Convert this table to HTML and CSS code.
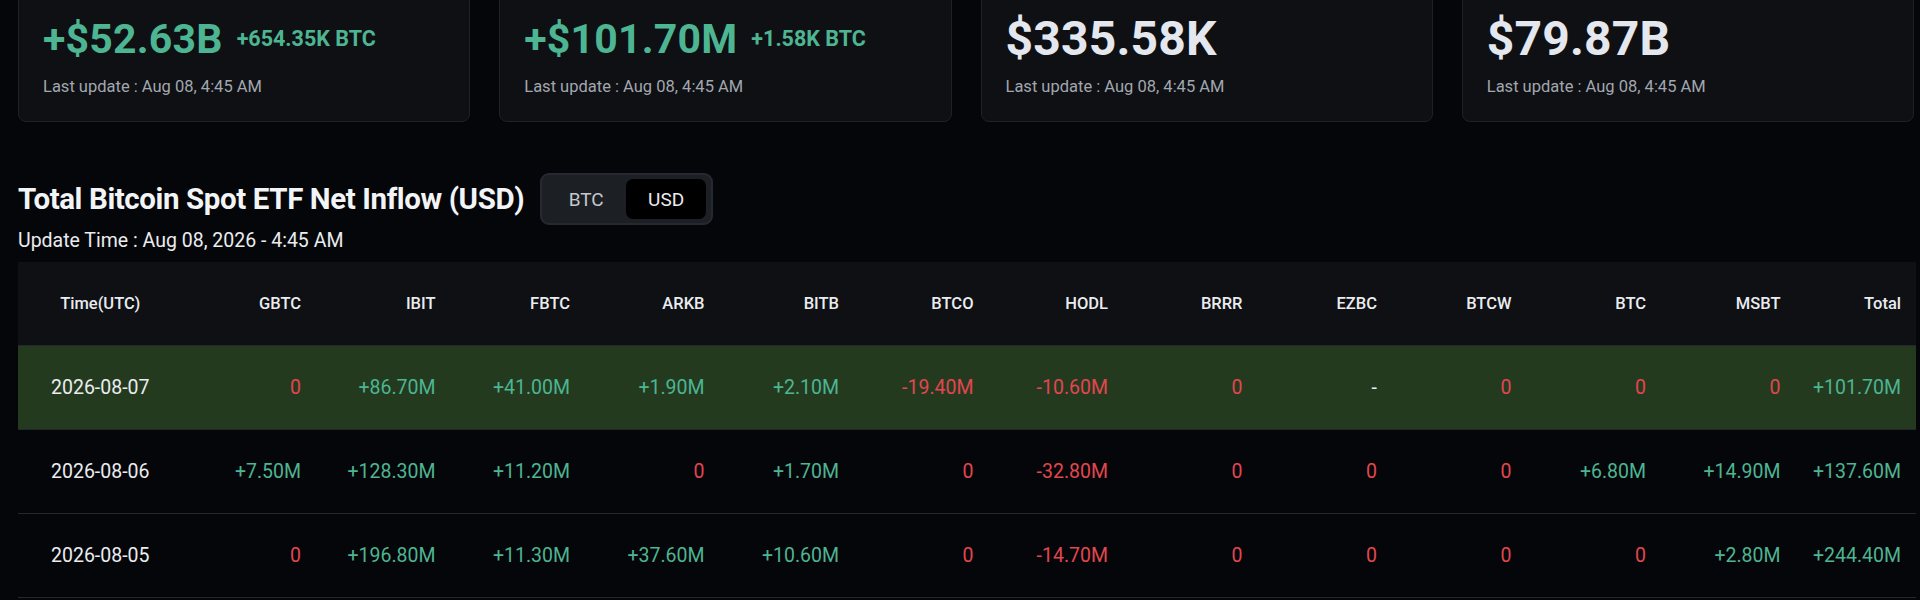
FILE: index.html
```html
<!DOCTYPE html>
<html lang="en">
<head>
<meta charset="utf-8">
<title>Bitcoin Spot ETF Net Inflow</title>
<link rel="stylesheet" href="styles.css">
</head>
<body>
<main class="page">
  <section class="cards">
    <div class="card">
      <div class="card-value"><span class="big up">+$52.63B</span><span class="sub up">+654.35K BTC</span></div>
      <div class="card-time">Last update : Aug 08, 4:45 AM</div>
    </div>
    <div class="card">
      <div class="card-value"><span class="big up">+$101.70M</span><span class="sub up">+1.58K BTC</span></div>
      <div class="card-time">Last update : Aug 08, 4:45 AM</div>
    </div>
    <div class="card">
      <div class="card-value"><span class="big plain">$335.58K</span></div>
      <div class="card-time">Last update : Aug 08, 4:45 AM</div>
    </div>
    <div class="card">
      <div class="card-value"><span class="big plain">$79.87B</span></div>
      <div class="card-time">Last update : Aug 08, 4:45 AM</div>
    </div>
  </section>

  <section class="flow">
    <div class="flow-head">
      <h2 class="flow-title">Total Bitcoin Spot ETF Net Inflow (USD)</h2>
      <div class="toggle">
        <button class="toggle-btn">BTC</button>
        <button class="toggle-btn active">USD</button>
      </div>
    </div>
    <div class="update-time">Update Time : Aug 08, 2026 - 4:45 AM</div>

    <table class="etf">
      <colgroup>
        <col class="c-time">
        <col class="c-fund"><col class="c-fund"><col class="c-fund"><col class="c-fund">
        <col class="c-fund"><col class="c-fund"><col class="c-fund"><col class="c-fund">
        <col class="c-fund"><col class="c-fund"><col class="c-fund"><col class="c-fund">
        <col class="c-total">
      </colgroup>
      <thead>
        <tr>
          <th>Time(UTC)</th><th>GBTC</th><th>IBIT</th><th>FBTC</th><th>ARKB</th><th>BITB</th><th>BTCO</th><th>HODL</th><th>BRRR</th><th>EZBC</th><th>BTCW</th><th>BTC</th><th>MSBT</th><th>Total</th>
        </tr>
      </thead>
      <tbody>
        <tr class="hl">
          <td>2026-08-07</td><td class="dn">0</td><td class="up">+86.70M</td><td class="up">+41.00M</td><td class="up">+1.90M</td><td class="up">+2.10M</td><td class="dn">-19.40M</td><td class="dn">-10.60M</td><td class="dn">0</td><td class="nil">-</td><td class="dn">0</td><td class="dn">0</td><td class="dn">0</td><td class="up">+101.70M</td>
        </tr>
        <tr>
          <td>2026-08-06</td><td class="up">+7.50M</td><td class="up">+128.30M</td><td class="up">+11.20M</td><td class="dn">0</td><td class="up">+1.70M</td><td class="dn">0</td><td class="dn">-32.80M</td><td class="dn">0</td><td class="dn">0</td><td class="dn">0</td><td class="up">+6.80M</td><td class="up">+14.90M</td><td class="up">+137.60M</td>
        </tr>
        <tr>
          <td>2026-08-05</td><td class="dn">0</td><td class="up">+196.80M</td><td class="up">+11.30M</td><td class="up">+37.60M</td><td class="up">+10.60M</td><td class="dn">0</td><td class="dn">-14.70M</td><td class="dn">0</td><td class="dn">0</td><td class="dn">0</td><td class="dn">0</td><td class="up">+2.80M</td><td class="up">+244.40M</td>
        </tr>
      </tbody>
    </table>
  </section>
</main>
</body>
</html>
```

FILE: styles.css
```css
* { box-sizing: border-box; }

html, body {
  margin: 0;
  padding: 0;
  background: #050609;
  color: #eaecef;
  font-family: Roboto, "Liberation Sans", Arial, sans-serif;
  overflow: hidden;
}

.page {
  padding: 0 4px 0 18px;
}

.cards {
  display: grid;
  grid-template-columns: repeat(4, 1fr);
  gap: 29px;
  margin-top: -11px;
  margin-right: 2px;
}

.card {
  background: #0e1014;
  border: 1px solid #1e2127;
  border-radius: 8px;
  padding: 25px 24px 22px 24px;
}

.card-value {
  display: flex;
  align-items: center;
  gap: 14px;
  height: 48px;
}

.big {
  font-size: 41px;
  font-weight: 700;
  line-height: 48px;
  letter-spacing: 0.2px;
}

.big.plain {
  font-size: 48px;
  color: #e4e8ee;
}

.sub {
  font-size: 21.5px;
  font-weight: 700;
  line-height: 26px;
}

.big.up, .sub.up { color: #4db592; }

.card-time {
  margin-top: 12px;
  font-size: 16.5px;
  line-height: 24px;
  color: #a2a7af;
}

.flow-head {
  display: flex;
  align-items: center;
  gap: 16px;
  margin-top: 51px;
  height: 52px;
}

.flow-title {
  margin: 0;
  font-size: 29.5px;
  font-weight: 700;
  letter-spacing: -0.4px;
  color: #f2f4f6;
}

.toggle {
  display: flex;
  align-items: center;
  width: 173px;
  height: 52px;
  padding: 4px 5px 4px 4px;
  background: #1c1f24;
  border: 2px solid #262a30;
  border-radius: 9px;
}

.toggle-btn {
  flex: 1;
  height: 100%;
  border: 0;
  border-radius: 7px;
  background: transparent;
  font-family: inherit;
  font-size: 19px;
  color: #c4c8ce;
  padding: 0;
}

.toggle-btn.active {
  background: #000000;
  color: #eaecef;
}

.update-time {
  margin-top: 4px;
  font-size: 19.5px;
  line-height: 24px;
  color: #eaecef;
}

.etf {
  margin-top: 9px;
  width: 100%;
  border-collapse: collapse;
  table-layout: fixed;
}

.c-time { width: 164.5px; }
.c-fund { width: 134.5px; }

.etf th, .etf td {
  height: 84px;
  padding: 0 16px 0 0;
  text-align: right;
  white-space: nowrap;
}

.etf th:first-child, .etf td:first-child {
  text-align: center;
  padding: 0;
}

.etf th:last-child, .etf td:last-child {
  padding-right: 15px;
}

.etf thead tr {
  background: #0e1014;
}

.etf th {
  font-size: 16.5px;
  font-weight: 500;
  color: #eaecef;
  height: 83px;
}

.etf td {
  font-size: 19.5px;
  font-weight: 400;
  color: #eaecef;
  border-top: 1px solid #24272d;
}

.etf tbody tr:last-child td {
  border-bottom: 1px solid #24272d;
}

.etf tr.hl {
  background: #243a1f;
}

.etf td.up { color: #4db592; }
.etf td.dn { color: #e2464f; }
.etf td.nil { color: #eaecef; }
```
